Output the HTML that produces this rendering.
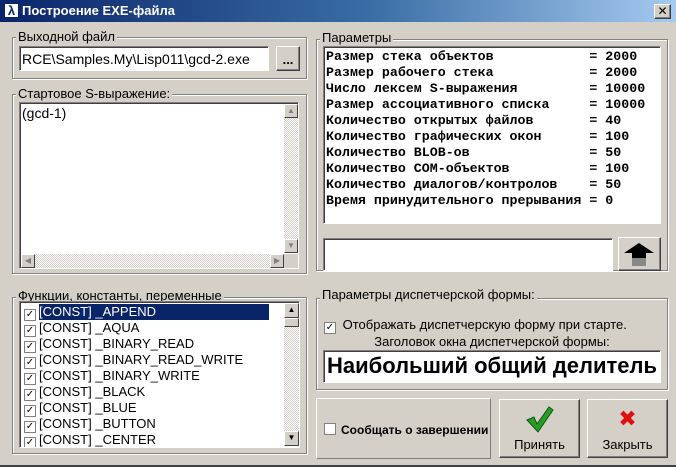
<!DOCTYPE html>
<html><head><meta charset="utf-8"><style>
*{box-sizing:border-box}
body{margin:0;width:676px;height:467px;background:#d4d0c8;font-family:"Liberation Sans","DejaVu Sans",sans-serif;font-size:13px;color:#000;position:relative;overflow:hidden}
.a{position:absolute}
.title{left:0;top:0;width:676px;height:22px;background:linear-gradient(to right,#0a246a,#3a6ea5 55%,#a6caf0);color:#fff;font-weight:bold;font-size:13px;line-height:22px;padding-left:22px}
.grp{position:absolute;border:1px solid #808080;box-shadow:1px 1px 0 #fff, inset 1px 1px 0 #fff}
.lbl{position:absolute;background:#d4d0c8;padding:0 2px;line-height:14px}
.sunk{position:absolute;background:#fff;border:1px solid;border-color:#808080 #fff #fff #808080;box-shadow:inset 1px 1px 0 #404040}
.btn{position:absolute;background:#d4d0c8;border:1px solid;border-color:#fff #404040 #404040 #fff;box-shadow:inset -1px -1px 0 #808080}
.sb{position:absolute;background:repeating-conic-gradient(#d4d0c8 0 25%,#fff 0 50%) 0 0/2px 2px}
.sbb{position:absolute;width:14px;height:14px;background:#d4d0c8;border:1px solid;border-color:#fff #404040 #404040 #fff;font-size:8px;line-height:12px;text-align:center;color:#808080}
.mono{font-family:"Liberation Mono",monospace;font-weight:bold;font-size:13.3px;line-height:16px;white-space:pre}
.row{height:16px;line-height:16px;white-space:nowrap;padding-left:2px}
.cb{display:inline-block;width:12px;height:12px;border:1px solid #808080;background:#fff;vertical-align:-1px;margin-right:3px;font-size:10px;line-height:10px;text-align:center;font-weight:bold}
</style></head><body>
<div class="a title">Построение EXE-файла</div>
<div class="a" style="left:4px;top:3px;width:15px;height:15px;background:#fff;border:1px solid #0a246a;color:#0a246a;font-weight:bold;font-size:13px;line-height:13px;text-align:center">λ</div>
<div class="btn" style="left:654px;top:4px;width:17px;height:15px;font-size:12px;line-height:12px;text-align:center;font-weight:bold">✕</div>

<div class="grp" style="left:12px;top:37px;width:295px;height:42px"></div>
<div class="lbl" style="left:16px;top:30px">Выходной файл</div>
<div class="sunk" style="left:19px;top:46px;width:250px;height:25px;padding:3px 2px;line-height:18px;overflow:hidden;white-space:nowrap;font-size:14px">RCE\Samples.My\Lisp011\gcd-2.exe</div>
<div class="btn" style="left:276px;top:46px;width:24px;height:25px;text-align:center;font-weight:bold;line-height:26px">...</div>

<div class="grp" style="left:12px;top:94px;width:295px;height:180px"></div>
<div class="lbl" style="left:16px;top:87px">Стартовое S-выражение:</div>
<div class="sunk" style="left:19px;top:102px;width:280px;height:167px;padding:2px 2px;font-size:14px">(gcd-1)</div>
<div class="sb" style="left:284px;top:104px;width:14px;height:149px"></div>
<div class="sbb" style="left:284px;top:104px">▲</div>
<div class="sbb" style="left:284px;top:239px">▼</div>
<div class="sb" style="left:21px;top:254px;width:263px;height:14px"></div>
<div class="sbb" style="left:21px;top:254px">◀</div>
<div class="sbb" style="left:270px;top:254px">▶</div>
<div class="a" style="left:284px;top:254px;width:14px;height:14px;background:#d4d0c8"></div>

<div class="grp" style="left:12px;top:297px;width:295px;height:157px"></div>
<div class="lbl" style="left:16px;top:289px">Функции, константы, переменные</div>
<div class="sunk" style="left:19px;top:301px;width:281px;height:147px;padding:2px 0 0 2px;overflow:hidden">
<div class="row"><span class="cb">✓</span><span style="background:#0a246a;color:#fff;display:inline-block;width:230px">[CONST] _APPEND</span></div>
<div class="row"><span class="cb">✓</span>[CONST] _AQUA</div>
<div class="row"><span class="cb">✓</span>[CONST] _BINARY_READ</div>
<div class="row"><span class="cb">✓</span>[CONST] _BINARY_READ_WRITE</div>
<div class="row"><span class="cb">✓</span>[CONST] _BINARY_WRITE</div>
<div class="row"><span class="cb">✓</span>[CONST] _BLACK</div>
<div class="row"><span class="cb">✓</span>[CONST] _BLUE</div>
<div class="row"><span class="cb">✓</span>[CONST] _BUTTON</div>
<div class="row"><span class="cb">✓</span>[CONST] _CENTER</div>
</div>
<div class="sb" style="left:284px;top:303px;width:15px;height:143px"></div>
<div class="sbb" style="left:284px;top:303px;width:15px;height:15px;color:#000">▲</div>
<div class="a" style="left:284px;top:318px;width:15px;height:9px;background:#d4d0c8;border:1px solid;border-color:#fff #404040 #404040 #fff"></div>
<div class="sbb" style="left:284px;top:431px;width:15px;height:15px;color:#000">▼</div>

<div class="grp" style="left:316px;top:39px;width:352px;height:232px"></div>
<div class="lbl" style="left:320px;top:31px">Параметры</div>
<div class="sunk mono" style="left:323px;top:46px;width:338px;height:178px;padding:2px 2px">Размер стека объектов            = 2000
Размер рабочего стека            = 2000
Число лексем S-выражения         = 10000
Размер ассоциативного списка     = 10000
Количество открытых файлов       = 40
Количество графических окон      = 100
Количество BLOB-ов               = 50
Количество COM-объектов          = 100
Количество диалогов/контролов    = 50
Время принудительного прерывания = 0</div>
<div class="sunk" style="left:323px;top:238px;width:290px;height:33px"></div>
<div class="btn" style="left:618px;top:237px;width:43px;height:34px">
<svg width="41" height="32" style="position:absolute;left:0;top:0"><polygon points="20,5 35,15 27,15 27,28 13,28 13,15 5,15" fill="#000"/><rect x="13" y="20" width="14" height="8" fill="#888"/></svg></div>

<div class="grp" style="left:316px;top:298px;width:352px;height:92px"></div>
<div class="lbl" style="left:320px;top:288px">Параметры диспетчерской формы:</div>
<div class="a" style="left:324px;top:317px;white-space:nowrap"><span class="cb">✓</span> Отображать диспетчерскую форму при старте.</div>
<div class="a" style="left:316px;top:334px;width:352px;text-align:center">Заголовок окна диспетчерской формы:</div>
<div class="sunk" style="left:323px;top:350px;width:338px;height:33px;font-weight:bold;font-size:22px;line-height:30px;text-align:center;white-space:nowrap;overflow:hidden">Наибольший общий делитель</div>

<div class="a" style="left:316px;top:398px;width:175px;height:61px;border:1px solid;border-color:#fff #808080 #808080 #fff"></div>
<div class="a" style="left:324px;top:423px;font-weight:bold;font-size:12px;white-space:nowrap"><span class="cb" style="margin-right:5px"></span>Сообщать о завершении</div>
<div class="btn" style="left:499px;top:399px;width:81px;height:59px;text-align:center">
<svg width="30" height="28" style="position:absolute;left:24px;top:5px"><path d="M3 15 L10 12 L13 19 L25 2 L29 5 L14 27 Z" fill="#2a9a2a" stroke="#0a5a0a" stroke-width="1"/></svg>
<div style="position:absolute;left:0;right:0;top:37px">Принять</div></div>
<div class="btn" style="left:587px;top:399px;width:81px;height:59px;text-align:center">
<div style="position:absolute;left:0;right:0;top:6px;color:#e01010;font-weight:bold;font-size:22px">✖</div>
<div style="position:absolute;left:0;right:0;top:37px">Закрыть</div></div>
<div class="a" style="left:0;top:465px;width:676px;height:2px;background:#404040"></div>
</body></html>
